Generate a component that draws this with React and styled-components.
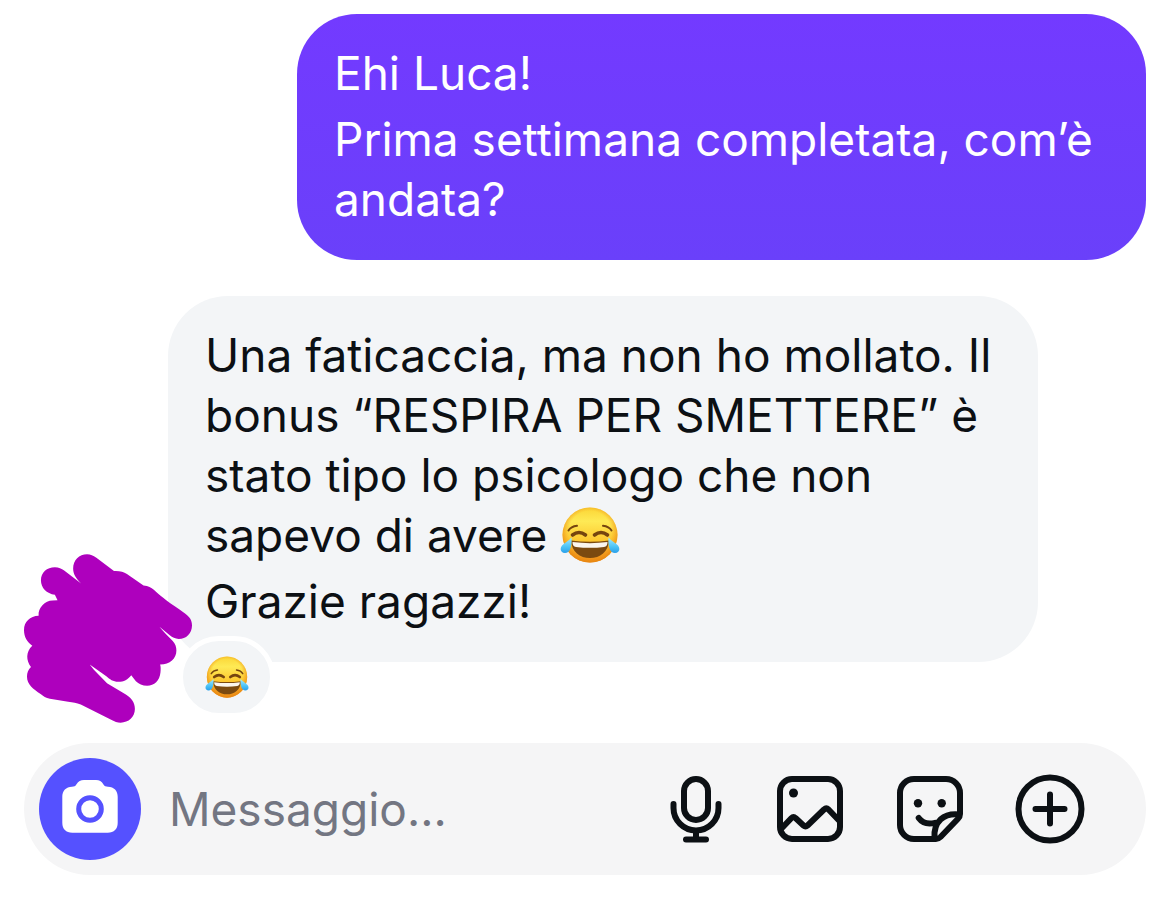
import React, { useId } from "react";
import styled, { createGlobalStyle } from "styled-components";

const GlobalStyle = createGlobalStyle`
  * { box-sizing: border-box; }
  body {
    margin: 0;
    background: #ffffff;
    color: #0c1014;
    font-family: Inter, "Liberation Sans", sans-serif;
    font-size: 46px;
    line-height: 60px;
  }
`;

const Page = styled.main`
  display: flex;
  flex-direction: column;
  gap: 81px;
  padding: 14px 24px 26px;
`;

const Thread = styled.section`
  display: flex;
  flex-direction: column;
  gap: 36px;
`;

const MessageRow = styled.div`
  display: flex;
  justify-content: ${(p) => (p.$own ? "flex-end" : "flex-start")};
`;

const AvatarSlot = styled.div`
  position: relative;
  z-index: 1;
  flex: 0 0 144px;
`;

const Scribble = styled.svg`
  position: absolute;
  left: 0;
  bottom: -61px;
  width: 168px;
  height: 169px;
`;

const Bubble = styled.article`
  position: relative;
  display: flex;
  flex-direction: column;
  gap: 6px;
  width: 100%;
  max-width: ${(p) => (p.$own ? "849px" : "870px")};
  padding: 29px 37px 31px;
  border-radius: 60px;
  color: ${(p) => (p.$own ? "#ffffff" : "#0c1014")};
  background: ${(p) =>
    p.$own ? "linear-gradient(#733aff, #6a40fa)" : "#f3f5f7"};
`;

const Paragraph = styled.p`
  margin: 0;
`;

const Reaction = styled.button`
  position: absolute;
  left: 10px;
  bottom: -56px;
  display: flex;
  align-items: center;
  justify-content: center;
  width: 97px;
  height: 82px;
  padding: 0;
  border: 5px solid #ffffff;
  border-radius: 41px;
  background: #f3f5f7;
`;

const EmojiSvg = styled.svg`
  width: ${(p) => (p.$small ? "44px" : "60px")};
  height: ${(p) => (p.$small ? "42px" : "56px")};
  vertical-align: -11px;
`;

const Composer = styled.form`
  display: flex;
  align-items: center;
  height: 132px;
  padding: 0 60px 0 15px;
  border-radius: 66px;
  background: #f5f5f6;
`;

const CameraButton = styled.button`
  flex: none;
  width: 102px;
  height: 102px;
  padding: 0;
  border: 0;
  border-radius: 50%;
  background: #5551ff;
  svg { display: block; }
`;

const MessageInput = styled.input`
  flex: 1;
  min-width: 0;
  margin: 0 28px;
  padding: 0;
  border: 0;
  outline: 0;
  background: transparent;
  color: #0c1014;
  font: inherit;
  &::placeholder { color: #737682; opacity: 1; }
`;

const Tools = styled.div`
  display: flex;
  align-items: center;
  gap: 48px;
`;

const ToolButton = styled.button`
  padding: 0;
  border: 0;
  background: transparent;
  color: #0c1014;
  svg {
    display: block;
    fill: none;
    stroke: currentColor;
    stroke-width: 6;
    stroke-linecap: round;
    stroke-linejoin: round;
  }
`;

function JoyEmoji({ small }) {
  const id = useId();
  return (
    <EmojiSvg $small={small} viewBox="0 0 60 56" preserveAspectRatio="none" role="img" aria-label="😂">
      <defs>
        <linearGradient id={`${id}face`} x1="0" y1="0" x2="0" y2="1">
          <stop offset="0" stopColor="#fbd535" />
          <stop offset="0.25" stopColor="#feea55" />
          <stop offset="0.6" stopColor="#fdc830" />
          <stop offset="1" stopColor="#f18d1c" />
        </linearGradient>
        <radialGradient id={`${id}edge`} cx="0.5" cy="0.45" r="0.55">
          <stop offset="0.7" stopColor="#f49a1a" stopOpacity="0" />
          <stop offset="1" stopColor="#e6850f" stopOpacity="0.95" />
        </radialGradient>
        <linearGradient id={`${id}tear`} x1="0" y1="0" x2="0" y2="1">
          <stop offset="0" stopColor="#a5ebff" />
          <stop offset="0.6" stopColor="#4cc3f6" />
          <stop offset="1" stopColor="#2aa0ea" />
        </linearGradient>
      </defs>
      <circle cx="30" cy="28" r="27.5" fill={`url(#${id}face)`} />
      <circle cx="30" cy="28" r="27.5" fill={`url(#${id}edge)`} />
      <g fill="none" stroke="#75450f" strokeLinecap="round">
        <path d="M8.500 23.500Q11 19.500 17 18.800M51.500 23.500Q49 19.500 43 18.800" strokeWidth="2" />
        <path d="M12.500 28Q19 23 25.500 28M34.500 28Q41 23 47.500 28" strokeWidth="3.600" />
      </g>
      <path d="M11 33.500Q30 36 49 33.500C48.500 45 40 51 30 51S11.500 45 11 33.500Z" fill="#7b4a10" />
      <path d="M12.500 35Q30 37.300 47.500 35C47.500 38 46.500 39.500 44 39.900Q30 41.800 16 39.900C13.500 39.500 12.500 38 12.500 35Z" fill="#fbf6ee" />
      <path d="M11.500 30.500C12 37 11 46 5 46C.5 46-.5 41.500 2 38.500C4 36 8.500 34 11.500 30.500Z" fill={`url(#${id}tear)`} />
      <path d="M48.500 30.500C48 37 49 46 55 46C59.500 46 60.500 41.500 58 38.500C56 36 51.500 34 48.500 30.500Z" fill={`url(#${id}tear)`} />
    </EmojiSvg>
  );
}

function HiddenAvatar() {
  return (
    <Scribble viewBox="42 42 506 507" aria-hidden="true">
      <path
        fill="#ae00bd"
        d="M190 85C190 60 208 42 232 42C243 42 250 46 260 52L313 92C330 91 342 95 352 101L402 136C417 137 425 142 433 149C460 174 480 188 527 220C540 229 548 240 548 256C548 280 530 297 508 297C497 297 489 292 481 286L450 260C462 276 478 290 490 303C498 312 501 321 501 332C501 356 482 374 452 374C454 381 454 388 453 398C451 422 434 438 413 438C399 438 387 432 379 424L365 406C355 419 343 426 326 426C310 426 300 418 291 410L240 374C256 396 275 412 292 430L340 459C365 473 376 487 376 508C376 532 357 549 333 549C323 549 315 546 306 541L213 494C200 489 190 488 175 486L120 477C108 475 100 470 92 463C70 447 51 435 51 410C51 397 55 389 63 381C48 362 47 335 67 317C52 306 42 292 42 270C42 245 60 228 86 227C84 203 105 181 128 181L143 180L135 164C110 160 93 143 93 120C93 97 111 81 135 81C147 81 155 85 163 91L214 130C200 116 190 103 190 85Z"
      />
    </Scribble>
  );
}

export default function App() {
  return (
    <>
      <GlobalStyle />
      <Page>
        <Thread>
          <MessageRow $own>
            <Bubble $own>
              <Paragraph>Ehi Luca!</Paragraph>
              <Paragraph>Prima settimana completata, com’è andata?</Paragraph>
            </Bubble>
          </MessageRow>
          <MessageRow>
            <AvatarSlot>
              <HiddenAvatar />
            </AvatarSlot>
            <Bubble>
              <Paragraph>
                Una faticaccia, ma non ho mollato. Il bonus “RESPIRA PER
                SMETTERE” è stato tipo lo psicologo che non sapevo di avere{" "}
                <JoyEmoji />
              </Paragraph>
              <Paragraph>Grazie ragazzi!</Paragraph>
              <Reaction type="button" aria-label="Reazione">
                <JoyEmoji small />
              </Reaction>
            </Bubble>
          </MessageRow>
        </Thread>

        <Composer>
          <CameraButton type="button" aria-label="Fotocamera">
            <svg width="102" height="102" viewBox="0 0 102 102">
              <path
                fill="#ffffff"
                d="M33 28.700C35 28.700 36.500 28 37.500 26.200C39.500 23 41.500 22 45 22H57C60.500 22 62.500 23 64.300 26.200C65.300 28 67 28.700 69 28.700C75 28.700 78.700 33 78.700 38.700V64.700C78.700 71 75 74.700 68.700 74.700H33.300C27 74.700 23.300 71 23.300 64.700V38.700C23.300 33 27 28.700 33 28.700Z"
              />
              <circle cx="51" cy="51" r="11.300" fill="none" stroke="#5551ff" strokeWidth="5" />
            </svg>
          </CameraButton>
          <MessageInput type="text" aria-label="Messaggio" placeholder="Messaggio..." />
          <Tools>
            <ToolButton type="button" aria-label="Messaggio vocale">
              <svg width="60" height="72" viewBox="0 0 60 72">
                <rect x="18" y="6" width="24" height="41" rx="12" />
                <path d="M7.500 31V35A22.500 22.500 0 0 0 52.500 35V31M30 58V66M20 66.500H40" />
              </svg>
            </ToolButton>
            <ToolButton type="button" aria-label="Galleria">
              <svg width="72" height="72" viewBox="0 0 72 72">
                <rect x="6" y="6" width="60" height="60" rx="12" />
                <path d="M7 56L17.500 45Q19.500 43 21.500 45L29.500 52.500Q31.500 54.300 33.500 52.500L50 36.500Q52.300 34.500 54.500 36.500L65.500 48" />
                <circle cx="19.500" cy="20" r="4.500" fill="currentColor" stroke="none" />
              </svg>
            </ToolButton>
            <ToolButton type="button" aria-label="Adesivi">
              <svg width="72" height="72" viewBox="0 0 72 72">
                <path d="M42 66H20A14 14 0 0 1 6 52V20A14 14 0 0 1 20 6H52A14 14 0 0 1 66 20V41C66 43 65.200 44.500 64 45.700L46.500 64C45.200 65.300 43.800 66 42 66Z" />
                <path d="M65 41.500C50 40 39.500 48 40.500 65M24.700 45C28 49.500 34 51.500 41 49.800" />
                <circle cx="24" cy="30.300" r="4.200" fill="currentColor" stroke="none" />
                <circle cx="47.700" cy="30.300" r="4.200" fill="currentColor" stroke="none" />
              </svg>
            </ToolButton>
            <ToolButton type="button" aria-label="Aggiungi">
              <svg width="72" height="72" viewBox="0 0 72 72">
                <circle cx="36" cy="36" r="31.500" />
                <path d="M21.500 36H50.500M36 21.500V50.500" />
              </svg>
            </ToolButton>
          </Tools>
        </Composer>
      </Page>
    </>
  );
}
